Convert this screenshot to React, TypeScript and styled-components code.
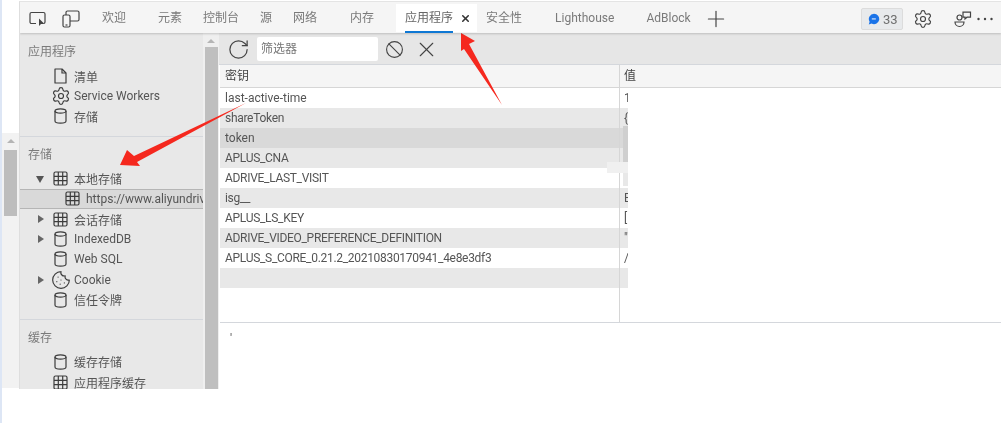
import React from "react"
import styled, { createGlobalStyle } from "styled-components"
import { Ban, Cookie, Plus, RotateCw, Settings, X } from "lucide-react"

const GlobalStyle = createGlobalStyle`
  html, body {
    margin: 0;
    padding: 0;
    background: #fff;
  }
  body {
    font-family: Roboto, "Noto Sans CJK SC", sans-serif;
    font-size: 12px;
    color: #555;
  }
`

const Page = styled.div`
  position: relative;
  width: 1001px;
  height: 423px;
  overflow: hidden;
  display: flex;
  align-items: flex-start;
  background: #fff;
  border-left: 2px solid #dde6f5;
  box-sizing: border-box;
  filter: blur(0.4px);
`

const Gutter = styled.div`
  width: 17px;
  height: 388px;
  flex: none;
  display: flex;
  flex-direction: column;
  align-items: center;
  padding-top: 133px;
  box-sizing: border-box;
`

const GutterInner = styled.div`
  flex: 1;
  align-self: stretch;
  background: #f2f2f2;
  display: flex;
  flex-direction: column;
  align-items: center;
  padding-top: 6px;
`

const GutterArrow = styled.div`
  width: 0;
  height: 0;
  border-left: 4px solid transparent;
  border-right: 4px solid transparent;
  border-bottom: 4px solid #b5b5b5;
  margin-bottom: 7px;
`

const GutterThumb = styled.div`
  width: 13px;
  height: 66px;
  background: #bdbdbd;
`

const Devtools = styled.div`
  width: 982px;
  height: 388px;
  flex: none;
  margin-top: 1px;
  display: flex;
  flex-direction: column;
  border-top: 1px solid #e4e4e4;
  border-left: 1px solid #dedede;
  box-sizing: border-box;
  overflow: hidden;
`

const Toolbar = styled.header`
  height: 31px;
  flex: none;
  display: flex;
  align-items: center;
  background: #f5f5f5;
  box-shadow: 0 1px 2px rgba(0, 0, 0, 0.18);
  position: relative;
  z-index: 1;
`

const ToolIcons = styled.div`
  display: flex;
  align-items: center;
  gap: 15px;
  padding: 3px 0 0 9px;
  width: 73px;
  flex: none;
`

const Tab = styled.div<{ $left: number }>`
  margin-left: ${props => props.$left}px;
  color: #7a7a7a;
  white-space: nowrap;
  line-height: 33px;
  height: 31px;
`

const ActiveTab = styled.div`
  margin-left: 22px;
  width: 81px;
  height: 28px;
  align-self: flex-end;
  margin-bottom: 1px;
  flex: none;
  background: #fff;
  box-sizing: border-box;
  padding-left: 9px;
  display: flex;
  color: #666;
  line-height: 28px;
`

const ActiveLabel = styled.span`
  height: 27px;
  width: 48px;
  border-bottom: 2px solid #0f78d4;
`

const TabClose = styled.span`
  margin-left: 7px;
  display: flex;
  align-items: center;
  color: #333;
  height: 28px;
`

const AddTab = styled.div`
  margin-left: 12px;
  padding-top: 2px;
  display: flex;
  color: #444;
`

const ToolbarEnd = styled.div`
  margin-left: auto;
  display: flex;
  align-items: center;
  padding: 3px 8px 0 0;
`

const IssueBadge = styled.div`
  width: 42px;
  height: 22px;
  box-sizing: border-box;
  display: flex;
  align-items: center;
  gap: 3px;
  padding-left: 6px;
  background: #e8eaec;
  border: 1px solid #dcdcdc;
  border-radius: 2px;
  color: #6e6e6e;
  font-size: 13px;
`

const EndIcon = styled.div<{ $width: number; $left?: number }>`
  width: ${props => props.$width}px;
  margin-left: ${props => props.$left || 0}px;
  display: flex;
  justify-content: center;
  color: #444;
`

const Body = styled.div`
  flex: 1;
  display: flex;
  min-height: 0;
`

const Sidebar = styled.aside`
  width: 183px;
  flex: none;
  background: #e8e8e8;
  overflow: hidden;
  padding-top: 1px;
`

const Section = styled.section<{ $last?: boolean }>`
  padding-top: 8px;
  padding-bottom: 9px;
  border-bottom: ${props => (props.$last ? "none" : "1px solid #d4d7dc")};
`

const SectionTitle = styled.div`
  height: 20px;
  line-height: 20px;
  padding-left: 8px;
  color: #7b7b7b;
  margin-bottom: 4px;
`

const TreeRow = styled.div<{ $selected?: boolean; $depth?: number }>`
  height: 20.2px;
  box-sizing: border-box;
  display: flex;
  align-items: center;
  white-space: nowrap;
  overflow: hidden;
  color: #555;
  position: relative;
  padding-left: ${props => (props.$depth ? 45 : 33)}px;
  background: ${props => (props.$selected ? "#d9d9d9" : "transparent")};
  border-top: ${props => (props.$selected ? "1px solid #b5b5b5" : "none")};
  border-bottom: ${props => (props.$selected ? "1px solid #b5b5b5" : "none")};
`

const TreeIcon = styled.span`
  width: 15px;
  height: 16px;
  margin-right: 6px;
  flex: none;
  display: flex;
  align-items: center;
  justify-content: center;
  color: #3c3c3c;
`

const Caret = styled.span<{ $open?: boolean }>`
  position: absolute;
  left: ${props => (props.$open ? 16 : 18)}px;
  top: 6px;
  width: 0;
  height: 0;
  ${props =>
    props.$open
      ? `border-left: 4.5px solid transparent;
         border-right: 4.5px solid transparent;
         border-top: 7px solid #555;
         top: 7px;`
      : `border-top: 4.5px solid transparent;
         border-bottom: 4.5px solid transparent;
         border-left: 6px solid #666;`}
`

const SideScroll = styled.div`
  width: 16px;
  flex: none;
  background: #efefef;
  display: flex;
  flex-direction: column;
  align-items: center;
  padding-top: 6px;
  box-sizing: border-box;
`

const SideArrow = styled(GutterArrow)`
  margin-bottom: 4px;
`

const SideThumb = styled.div`
  width: 13px;
  flex: 1;
  background: #bfbfbf;
`

const Main = styled.main`
  flex: 1;
  min-width: 0;
  display: flex;
  flex-direction: column;
  background: #fff;
`

const FilterBar = styled.div`
  height: 32px;
  flex: none;
  display: flex;
  align-items: center;
  background: #e6e6e6;
  border-bottom: 1px solid #d4d7dc;
  box-sizing: border-box;
  color: #444;
  padding: 1px 0 0 8px;
`

const FilterInput = styled.div`
  width: 121px;
  height: 24px;
  margin-left: 7px;
  margin-right: 7px;
  background: #fff;
  border-radius: 2px;
  line-height: 24px;
  padding-left: 4px;
  box-sizing: border-box;
  color: #777;
`

const FilterClear = styled.span`
  display: flex;
  margin-left: 10px;
`

const Table = styled.div`
  height: 257px;
  flex: none;
  position: relative;
  border-bottom: 1px solid #d4d7dc;
  box-sizing: content-box;
  margin-left: 1px;
`

const HeaderRow = styled.div`
  height: 23px;
  display: grid;
  grid-template-columns: 399px 1fr;
  background: #f5f5f5;
  border-bottom: 1px solid #d6d6d6;
  box-sizing: border-box;
  line-height: 23px;
  color: #444;
`

const Row = styled.div<{ $shade: string }>`
  width: 408px;
  height: 20px;
  display: grid;
  grid-template-columns: 399px 9px;
  background: ${props => props.$shade};
  line-height: 21px;
  overflow: hidden;
`

const KeyCell = styled.div<{ $tight?: boolean }>`
  padding-left: 5px;
  white-space: nowrap;
  letter-spacing: ${props => (props.$tight ? "-0.3px" : "0")};
`

const ValueCell = styled.div`
  padding-left: 4px;
  border-left: 1px solid #d6d6d6;
  white-space: nowrap;
  overflow: hidden;
`

const ColumnRule = styled.div`
  position: absolute;
  left: 399px;
  top: 23px;
  bottom: 0;
  width: 1px;
  background: #d6d6d6;
`

const Smudge = styled.div<{ $x: number; $y: number; $w: number; $h: number; $c: string }>`
  position: absolute;
  left: ${props => props.$x}px;
  top: ${props => props.$y}px;
  width: ${props => props.$w}px;
  height: ${props => props.$h}px;
  background: ${props => props.$c};
`

const Preview = styled.div`
  flex: 1;
  padding: 6px 0 0 11px;
  color: #555;
  line-height: 20px;
`

const ArrowLayer = styled.svg`
  position: absolute;
  left: -2px;
  top: 0;
  pointer-events: none;
`

const Inspect = () => (
  <svg width="18" height="16" viewBox="0 0 18 16" fill="none" stroke="#444" strokeWidth="1.2">
    <path d="M7 12.5H2.5A1.5 1.5 0 0 1 1 11V3a1.5 1.5 0 0 1 1.5-1.5h12A1.5 1.5 0 0 1 16 3v8a1.5 1.5 0 0 1-1 1.4" />
    <path d="M10 7.5l0 7.5 2-2 3.5 0z" fill="#444" stroke="none" />
  </svg>
)

const Device = () => (
  <svg width="18" height="18" viewBox="0 0 18 18" fill="none" stroke="#444" strokeWidth="1.2">
    <rect x="1" y="5" width="7" height="12" rx="1.5" />
    <path d="M4 5V2.5A1.5 1.5 0 0 1 5.5 1h10A1.5 1.5 0 0 1 17 2.5v7a1.5 1.5 0 0 1-1.5 1.5H8" />
    <path d="M3.5 15h2" />
  </svg>
)

const Message = () => (
  <svg width="12" height="12" viewBox="0 0 12 12">
    <path d="M6 .8a5.2 5.2 0 1 1-2.4 9.8L.8 11.4l.8-2.7A5.2 5.2 0 0 1 6 .8z" fill="#1a73e8" />
    <rect x="3.8" y="5.2" width="4" height="1.4" fill="#b9d4f7" />
  </svg>
)

const Feedback = () => (
  <svg width="18" height="17" viewBox="0 0 18 17" fill="none" stroke="#444" strokeWidth="1.2">
    <circle cx="5.5" cy="6.5" r="2.5" />
    <path d="M1 10h9a4.5 4.5 0 0 1-9 0z" transform="translate(0 1)" />
    <path d="M9 1.2h7.5v5H13l-2 1.8V6.200H9z" />
  </svg>
)

const MoreDots = () => (
  <svg width="16" height="4" viewBox="0 0 16 4" fill="#444">
    <circle cx="1.500" cy="2" r="1.200" />
    <circle cx="8" cy="2" r="1.200" />
    <circle cx="14.500" cy="2" r="1.200" />
  </svg>
)

const FileIcon = () => (
  <svg width="13" height="16" viewBox="0 0 13 16" fill="none" stroke="currentColor" strokeWidth="1.2">
    <path d="M1 1h7l4 4v10H1z" strokeLinejoin="round" />
    <path d="M8 1v4h4" />
  </svg>
)

const DbIcon = () => (
  <svg width="13" height="16" viewBox="0 0 13 16" fill="none" stroke="currentColor" strokeWidth="1.2">
    <ellipse cx="6.500" cy="3" rx="5.500" ry="2.200" />
    <path d="M1 3v10c0 1.300 2.500 2.200 5.500 2.200S12 14.300 12 13V3" />
  </svg>
)

const GridIcon = () => (
  <svg width="15" height="15" viewBox="0 0 15 15" fill="none" stroke="currentColor" strokeWidth="1.2">
    <rect x="1" y="1" width="13" height="13" rx="1.500" />
    <path d="M1 5.300h13M1 9.700h13M5.300 1v13M9.700 1v13" />
  </svg>
)

type Kind = "file" | "gear" | "db" | "grid" | "cookie"

const glyphs: Record<Kind, React.ReactNode> = {
  file: <FileIcon />,
  gear: <Settings size={20} strokeWidth={1.4} style={{ flex: "none" }} />,
  db: <DbIcon />,
  grid: <GridIcon />,
  cookie: <Cookie size={20} strokeWidth={1.4} style={{ flex: "none" }} />,
}

const Item = ({
  icon,
  label,
  caret,
  selected,
  depth,
}: {
  icon: Kind
  label: string
  caret?: "open" | "closed"
  selected?: boolean
  depth?: number
}) => (
  <TreeRow $selected={selected} $depth={depth}>
    {caret && <Caret $open={caret === "open"} />}
    <TreeIcon>{glyphs[icon]}</TreeIcon>
    {label}
  </TreeRow>
)

const rows = [
  { key: "last-active-time", value: "1", shade: "#fff" },
  { key: "shareToken", value: "{", shade: "#e8e8e8", tight: true },
  { key: "token", value: "", shade: "#d9d9d9" },
  { key: "APLUS_CNA", value: "", shade: "#e8e8e8", tight: true },
  { key: "ADRIVE_LAST_VISIT", value: "", shade: "#fff", tight: true },
  { key: "isg__", value: "E", shade: "#e8e8e8", tight: true },
  { key: "APLUS_LS_KEY", value: "[", shade: "#fff", tight: true },
  { key: "ADRIVE_VIDEO_PREFERENCE_DEFINITION", value: "\"", shade: "#e8e8e8", tight: true },
  { key: "APLUS_S_CORE_0.21.2_20210830170941_4e8e3df3", value: "/", shade: "#fff", tight: true },
  { key: "", value: "", shade: "#e8e8e8" },
]

const tabs = [
  { label: "欢迎", left: 0 },
  { label: "元素", left: 32 },
  { label: "控制台", left: 21 },
  { label: "源", left: 21 },
  { label: "网络", left: 21 },
  { label: "内存", left: 33 },
]

const App = () => (
  <>
    <GlobalStyle />
    <Page>
      <Gutter>
        <GutterInner>
          <GutterArrow />
          <GutterThumb />
        </GutterInner>
      </Gutter>
      <Devtools>
        <Toolbar>
          <ToolIcons>
            <Inspect />
            <Device />
          </ToolIcons>
          {tabs.map(tab => (
            <Tab key={tab.label} $left={tab.left}>
              {tab.label}
            </Tab>
          ))}
          <ActiveTab>
            <ActiveLabel>应用程序</ActiveLabel>
            <TabClose>
              <X size={11} strokeWidth={3.4} />
            </TabClose>
          </ActiveTab>
          <Tab $left={9}>安全性</Tab>
          <Tab $left={33}>Lighthouse</Tab>
          <Tab $left={32}>AdBlock</Tab>
          <AddTab>
            <Plus size={26} strokeWidth={1.1} />
          </AddTab>
          <ToolbarEnd>
            <IssueBadge>
              <Message />
              33
            </IssueBadge>
            <EndIcon $width={40}>
              <Settings size={20} strokeWidth={1.4} />
            </EndIcon>
            <EndIcon $width={28} $left={6}>
              <Feedback />
            </EndIcon>
            <EndIcon $width={16}>
              <MoreDots />
            </EndIcon>
          </ToolbarEnd>
        </Toolbar>
        <Body>
          <Sidebar>
            <Section>
              <SectionTitle>应用程序</SectionTitle>
              <Item icon="file" label="清单" />
              <Item icon="gear" label="Service Workers" />
              <Item icon="db" label="存储" />
            </Section>
            <Section>
              <SectionTitle>存储</SectionTitle>
              <Item icon="grid" label="本地存储" caret="open" />
              <Item icon="grid" label="https://www.aliyundrive.com" selected depth={1} />
              <Item icon="grid" label="会话存储" caret="closed" />
              <Item icon="db" label="IndexedDB" caret="closed" />
              <Item icon="db" label="Web SQL" />
              <Item icon="cookie" label="Cookie" caret="closed" />
              <Item icon="db" label="信任令牌" />
            </Section>
            <Section $last>
              <SectionTitle>缓存</SectionTitle>
              <Item icon="db" label="缓存存储" />
              <Item icon="grid" label="应用程序缓存" />
            </Section>
          </Sidebar>
          <SideScroll>
            <SideArrow />
            <SideThumb />
          </SideScroll>
          <Main>
            <FilterBar>
              <RotateCw size={23} strokeWidth={1.3} />
              <FilterInput>筛选器</FilterInput>
              <Ban size={19} strokeWidth={1.4} />
              <FilterClear>
                <X size={25} strokeWidth={1.1} />
              </FilterClear>
            </FilterBar>
            <Table>
              <HeaderRow>
                <KeyCell>密钥</KeyCell>
                <ValueCell>值</ValueCell>
              </HeaderRow>
              {rows.map((row, i) => (
                <Row key={i} $shade={row.shade}>
                  <KeyCell $tight={row.tight}>{row.key}</KeyCell>
                  <ValueCell>{row.value}</ValueCell>
                </Row>
              ))}
              <ColumnRule />
              <Smudge $x={403} $y={61} $w={5} $h={36} $c="#cfcfcf" />
              <Smudge $x={387} $y={97} $w={21} $h={11} $c="#f0f0f0" />
              <Smudge $x={403} $y={108} $w={5} $h={13} $c="#e8e8e8" />
            </Table>
            <Preview>'</Preview>
          </Main>
        </Body>
      </Devtools>
      <ArrowLayer width="1001" height="423" viewBox="0 0 1001 423">
        <path d="M461 33L475 41 469 44 502 105 464 49 461 51z" fill="#f5281e" />
        <path d="M120 165L127 150 134 156 246 103 137 162 140 166z" fill="#f5281e" />
      </ArrowLayer>
    </Page>
  </>
)

export default App
